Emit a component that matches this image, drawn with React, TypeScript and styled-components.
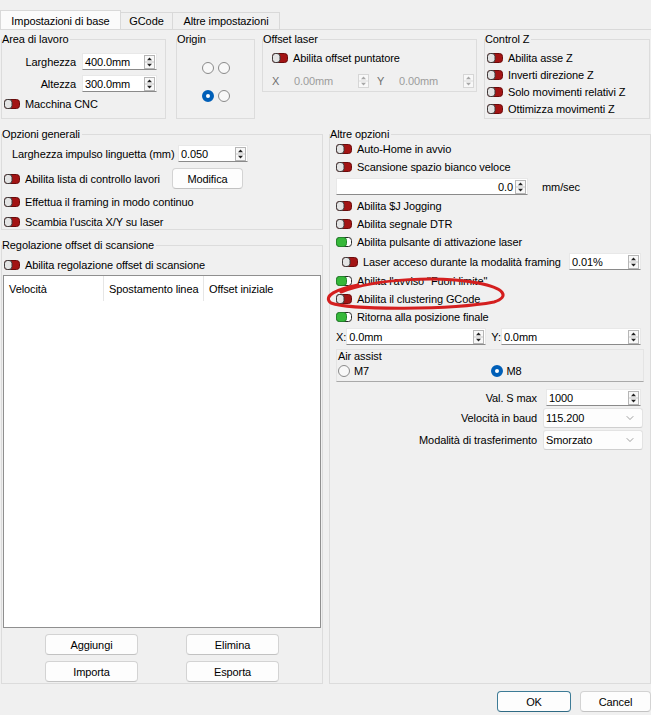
import React from 'react';
import styled, { createGlobalStyle } from 'styled-components';
import { ChevronDown } from 'lucide-react';

const GlobalStyle = createGlobalStyle`
  html, body { margin: 0; padding: 0; background: #f0f0f0; }
  body {
    font-family: "Liberation Sans", Arial, sans-serif;
    font-size: 11px;
    letter-spacing: -0.1px;
    color: #000;
  }
`;

const Window = styled.div`
  position: relative;
  width: 651px;
  height: 715px;
  overflow: hidden;
  display: flex;
  flex-direction: column;
  background: #f0f0f0;
`;

const TabBar = styled.div`
  display: flex;
  align-items: flex-end;
  height: 30px;
  padding-top: 10px;
  box-sizing: border-box;
  border-bottom: 1px solid #d9d9d9;
`;

const Tab = styled.div<{ $active?: boolean; $w: number }>`
  width: ${p => p.$w}px;
  height: ${p => (p.$active ? 19 : 17)}px;
  box-sizing: border-box;
  display: flex;
  align-items: center;
  justify-content: center;
  padding-top: ${p => (p.$active ? 2 : 0)}px;
  margin-left: -1px;
  border: 1px solid #d9d9d9;
  border-bottom: none;
  background: ${p => (p.$active ? '#fbfbfb' : '#f0f0f0')};
  &:first-child { margin-left: 0; }
`;

const Pane = styled.div`
  display: flex;
  flex-direction: column;
  gap: 9px;
  padding: 3px 1px 0 1px;
`;

const TopRow = styled.div`
  display: flex;
  align-items: flex-start;
`;

const BottomRow = styled.div`
  display: grid;
  grid-template-columns: 322px 322px;
  column-gap: 6px;
  height: 556px;
`;

const LeftColumn = styled.div`
  display: flex;
  flex-direction: column;
  gap: 9px;
  min-height: 0;
`;

const Group = styled.fieldset<{ $w?: number; $h: number; $ml?: number }>`
  margin: 0 0 0 ${p => p.$ml ?? 0}px;
  padding: 0;
  min-width: 0;
  width: ${p => (p.$w ? `${p.$w}px` : 'auto')};
  height: ${p => p.$h}px;
  box-sizing: border-box;
  border: 1px solid #dcdcdc;
`;

const Legend = styled.legend`
  padding: 0 2px 0 0;
  margin: 0;
  line-height: 12px;
`;

const Body = styled.div<{ $pad: string; $gap?: number }>`
  display: flex;
  flex-direction: column;
  gap: ${p => p.$gap ?? 0}px;
  padding: ${p => p.$pad};
  box-sizing: border-box;
`;

const ToggleRow = styled.div<{ $indent?: number }>`
  display: flex;
  align-items: center;
  gap: 5px;
  height: 14px;
  white-space: nowrap;
  margin-left: ${p => p.$indent ?? 0}px;
`;

const ToggleSvg = styled.svg`
  flex: none;
  display: block;
`;

const Toggle = ({ on }: { on?: boolean }) => (
  <ToggleSvg width="16" height="10" viewBox="0 0 16 10">
    {on ? (
      <>
        <rect x="0.5" y="0.5" width="15" height="9" rx="3" fill="#fff" stroke="#2a2a2a" />
        <rect x="0.5" y="0.5" width="10" height="9" rx="3" fill="#36b83a" stroke="#22872a" />
      </>
    ) : (
      <>
        <rect x="0.5" y="0.5" width="15" height="9" rx="3" fill="#a31414" stroke="#6a0b0b" />
        <rect x="0.5" y="0.5" width="7.5" height="9" rx="3" fill="#e4e4e4" stroke="#3a3a3a" />
      </>
    )}
  </ToggleSvg>
);

const Switch = ({ on, label, indent }: { on?: boolean; label: string; indent?: number }) => (
  <ToggleRow $indent={indent}>
    <Toggle on={on} />
    <span>{label}</span>
  </ToggleRow>
);

const FieldRow = styled.div<{ $cols: string; $indent?: number }>`
  display: grid;
  grid-template-columns: ${p => p.$cols};
  align-items: center;
  margin-left: ${p => p.$indent ?? 0}px;
  white-space: nowrap;
`;

const FieldLabel = styled.span<{ $right?: boolean; $pl?: number }>`
  text-align: ${p => (p.$right ? 'right' : 'left')};
  padding-right: ${p => (p.$right ? 6 : 0)}px;
  padding-left: ${p => p.$pl ?? 0}px;
`;

const SpinFrame = styled.div<{ $disabled?: boolean; $w?: number }>`
  display: flex;
  align-items: center;
  height: 17px;
  width: ${p => (p.$w ? `${p.$w}px` : 'auto')};
  box-sizing: border-box;
  padding: 0 1px 0 2px;
  background: ${p => (p.$disabled ? 'transparent' : '#ffffff')};
  border: 1px solid ${p => (p.$disabled ? 'transparent' : '#e8e8e8')};
  border-bottom-color: ${p => (p.$disabled ? 'transparent' : '#8a8a8a')};
  color: ${p => (p.$disabled ? '#9c9c9c' : '#000')};
`;

const SpinValue = styled.span<{ $right?: boolean }>`
  flex: 1;
  text-align: ${p => (p.$right ? 'right' : 'left')};
  padding-right: ${p => (p.$right ? 2 : 0)}px;
  white-space: nowrap;
`;

const Arrows = ({ disabled }: { disabled?: boolean }) => {
  const c = disabled ? '#a8a8a8' : '#222';
  return (
    <ToggleSvg width="11" height="14" viewBox="0 0 11 14">
      <rect x="0.5" y="0.5" width="10" height="13" fill="#f8f8f8" stroke={disabled ? '#d6d6d6' : '#b6b6b6'} />
      <line x1="1" y1="7" x2="10" y2="7" stroke={disabled ? '#dcdcdc' : '#c8c8c8'} />
      <path d="M3 5.2 L5.5 2.6 L8 5.2 Z" fill={c} />
      <path d="M3 8.8 L5.5 11.4 L8 8.8 Z" fill={c} />
    </ToggleSvg>
  );
};

const Spin = ({ value, disabled, right, w }: { value: string; disabled?: boolean; right?: boolean; w?: number }) => (
  <SpinFrame $disabled={disabled} $w={w}>
    <SpinValue $right={right}>{value}</SpinValue>
    <Arrows disabled={disabled} />
  </SpinFrame>
);

const GreyLabel = styled.span<{ $pl?: number }>`
  color: #6f6f6f;
  padding-left: ${p => p.$pl ?? 0}px;
`;

const RadioGrid = styled.div`
  display: grid;
  grid-template-columns: 12px 12px;
  column-gap: 4px;
  row-gap: 16px;
  justify-content: center;
`;

const Radio = styled.span<{ $checked?: boolean }>`
  display: block;
  flex: none;
  width: 12px;
  height: 12px;
  border-radius: 50%;
  box-sizing: border-box;
  border: ${p => (p.$checked ? '4px solid #005fb8' : '1px solid #8a8a8a')};
  background: ${p => (p.$checked ? '#fff' : '#f8f8f8')};
`;

const PushButton = styled.div<{ $w?: number; $default?: boolean }>`
  width: ${p => (p.$w ? `${p.$w}px` : 'auto')};
  height: 21px;
  box-sizing: border-box;
  display: flex;
  align-items: center;
  justify-content: center;
  background: #fdfdfd;
  border: 1px solid ${p => (p.$default ? '#3d7b96' : '#d3d3d3')};
  border-bottom-color: ${p => (p.$default ? '#2f6a84' : '#c2c2c2')};
  border-radius: 4px;
`;

const Table = styled.div`
  height: 353px;
  box-sizing: border-box;
  margin-top: 3px;
  background: #fff;
  border: 1px solid #8f8f8f;
`;

const TableHead = styled.div`
  display: grid;
  grid-template-columns: 100px 100px 1fr;
  height: 25px;
`;

const HeadCell = styled.div`
  display: flex;
  align-items: center;
  padding-left: 5px;
  border-right: 1px solid #e6e6e6;
  &:last-child { border-right: none; }
`;

const ButtonGrid = styled.div`
  display: grid;
  grid-template-columns: 93px 93px;
  column-gap: 48px;
  row-gap: 6px;
  justify-content: center;
  margin-top: 6px;
`;

const AirBox = styled.div`
  display: flex;
  flex-direction: column;
  height: 33px;
  box-sizing: border-box;
  border: 1px solid #e4e4e4;
  border-bottom-color: #a9a9a9;
  padding: 0 0 0 1px;
  margin-right: -1px;
`;

const AirTitle = styled.span`
  line-height: 12px;
`;

const RadioRow = styled.div`
  display: grid;
  grid-template-columns: 1fr 1fr;
  margin-top: 3px;
`;

const RadioItem = styled.div`
  display: flex;
  align-items: center;
  gap: 4px;
`;

const Form = styled.div`
  display: grid;
  grid-template-columns: 1fr 100px;
  row-gap: 2px;
  align-items: center;
  margin-top: 3px;
`;

const Combo = styled.div`
  height: 20px;
  box-sizing: border-box;
  display: flex;
  align-items: center;
  justify-content: space-between;
  padding: 0 6px 0 2px;
  background: #fdfdfd;
  border: 1px solid #e3e3e3;
  border-bottom-color: #cfcfcf;
  border-radius: 3px;
`;

const Footer = styled.div`
  display: flex;
  justify-content: flex-end;
  gap: 9px;
  padding-top: 7px;
`;

const Annotation = styled.svg`
  position: absolute;
  left: 0;
  top: 0;
  pointer-events: none;
`;

const App: React.FC = () => {
  return (
    <Window>
      <GlobalStyle />
      <TabBar>
        <Tab $active $w={121}>Impostazioni di base</Tab>
        <Tab $w={53}>GCode</Tab>
        <Tab $w={108}>Altre impostazioni</Tab>
      </TabBar>

      <Pane>
        <TopRow>
          <Group $w={165} $h={86}>
            <Legend>Area di lavoro</Legend>
            <Body $pad="8px 0 0 0" $gap={5}>
              <FieldRow $cols="80px 75px">
                <FieldLabel $right>Larghezza</FieldLabel>
                <Spin value="400.0mm" />
              </FieldRow>
              <FieldRow $cols="80px 75px">
                <FieldLabel $right>Altezza</FieldLabel>
                <Spin value="300.0mm" />
              </FieldRow>
              <Switch label="Macchina CNC" indent={2} />
            </Body>
          </Group>

          <Group $w={79} $h={86} $ml={10}>
            <Legend>Origin</Legend>
            <Body $pad="17px 0 0 0">
              <RadioGrid>
                <Radio />
                <Radio />
                <Radio $checked />
                <Radio />
              </RadioGrid>
            </Body>
          </Group>

          <Group $w={215} $h={59} $ml={7}>
            <Legend>Offset laser</Legend>
            <Body $pad="6px 0 0 9px" $gap={7}>
              <Switch label="Abilita offset puntatore" />
              <FieldRow $cols="auto 80px auto 80px">
                <GreyLabel>X</GreyLabel>
                <Spin value="0.00mm" disabled w={80} />
                <GreyLabel $pl={6}>Y</GreyLabel>
                <Spin value="0.00mm" disabled w={80} />
              </FieldRow>
            </Body>
          </Group>

          <Group $w={166} $h={86} $ml={7}>
            <Legend>Control Z</Legend>
            <Body $pad="6px 0 0 2px" $gap={3}>
              <Switch label="Abilita asse Z" />
              <Switch label="Inverti direzione Z" />
              <Switch label="Solo movimenti relativi Z" />
              <Switch label="Ottimizza movimenti Z" />
            </Body>
          </Group>
        </TopRow>

        <BottomRow>
          <LeftColumn>
            <Group $h={102}>
              <Legend>Opzioni generali</Legend>
              <Body $pad="5px 0 0 2px" $gap={6}>
                <FieldRow $cols="166px 70px" $indent={8}>
                  <FieldLabel>Larghezza impulso linguetta (mm)</FieldLabel>
                  <Spin value="0.050" />
                </FieldRow>
                <FieldRow $cols="168px 71px">
                  <Switch label="Abilita lista di controllo lavori" />
                  <PushButton>Modifica</PushButton>
                </FieldRow>
                <Switch label="Effettua il framing in modo continuo" />
                <Switch label="Scambia l'uscita X/Y su laser" />
              </Body>
            </Group>

            <Group $h={445}>
              <Legend>Regolazione offset di scansione</Legend>
              <Body $pad="7px 1px 1px 1px">
                <Switch label="Abilita regolazione offset di scansione" indent={1} />
                <Table>
                  <TableHead>
                    <HeadCell>Velocità</HeadCell>
                    <HeadCell>Spostamento linea</HeadCell>
                    <HeadCell>Offset iniziale</HeadCell>
                  </TableHead>
                </Table>
                <ButtonGrid>
                  <PushButton>Aggiungi</PushButton>
                  <PushButton>Elimina</PushButton>
                  <PushButton>Importa</PushButton>
                  <PushButton>Esporta</PushButton>
                </ButtonGrid>
              </Body>
            </Group>
          </LeftColumn>

          <Group $h={556}>
            <Legend>Altre opzioni</Legend>
            <Body $pad="2px 7px 0 6px" $gap={4}>
              <Switch label="Auto-Home in avvio" />
              <Switch label="Scansione spazio bianco veloce" />
              <FieldRow $cols="192px auto">
                <Spin value="0.0" right />
                <FieldLabel $pl={14}>mm/sec</FieldLabel>
              </FieldRow>
              <Switch label="Abilita $J Jogging" />
              <Switch label="Abilita segnale DTR" />
              <Switch on label="Abilita pulsante di attivazione laser" />
              <FieldRow $cols="1fr 72px 2px">
                <Switch label="Laser acceso durante la modalità framing" indent={6} />
                <Spin value="0.01%" />
              </FieldRow>
              <Switch on label={'Abilita l\'avviso "Fuori limite"'} />
              <Switch label="Abilita il clustering GCode" />
              <Switch on label="Ritorna alla posizione finale" />
              <FieldRow $cols="auto 1fr auto 1fr 2px">
                <span>X:</span>
                <Spin value="0.0mm" />
                <FieldLabel $pl={5}>Y:</FieldLabel>
                <Spin value="0.0mm" />
              </FieldRow>
              <AirBox>
                <AirTitle>Air assist</AirTitle>
                <RadioRow>
                  <RadioItem>
                    <Radio />
                    <span>M7</span>
                  </RadioItem>
                  <RadioItem>
                    <Radio $checked />
                    <span>M8</span>
                  </RadioItem>
                </RadioRow>
              </AirBox>
              <Form>
                <FieldLabel $right>Val. S max</FieldLabel>
                <FieldRow $cols="3px 95px">
                  <span />
                  <Spin value="1000" />
                </FieldRow>
                <FieldLabel $right>Velocità in baud</FieldLabel>
                <Combo>
                  <span>115.200</span>
                  <ChevronDown size={12} strokeWidth={1.2} color="#606060" />
                </Combo>
                <FieldLabel $right>Modalità di trasferimento</FieldLabel>
                <Combo>
                  <span>Smorzato</span>
                  <ChevronDown size={12} strokeWidth={1.2} color="#606060" />
                </Combo>
              </Form>
            </Body>
          </Group>
        </BottomRow>
      </Pane>

      <Footer>
        <PushButton $w={74} $default>OK</PushButton>
        <PushButton $w={71}>Cancel</PushButton>
      </Footer>

      <Annotation width="651" height="715" viewBox="0 0 651 715">
        <path
          d="M358 285 C337 289 322 296 331 303 C350 310 452 310 494 302 C510 297 505 288 478 283 C440 276 378 278 341 292"
          fill="none"
          stroke="#d41f1f"
          strokeWidth="3"
          strokeLinecap="round"
        />
      </Annotation>
    </Window>
  );
};

export default App;
